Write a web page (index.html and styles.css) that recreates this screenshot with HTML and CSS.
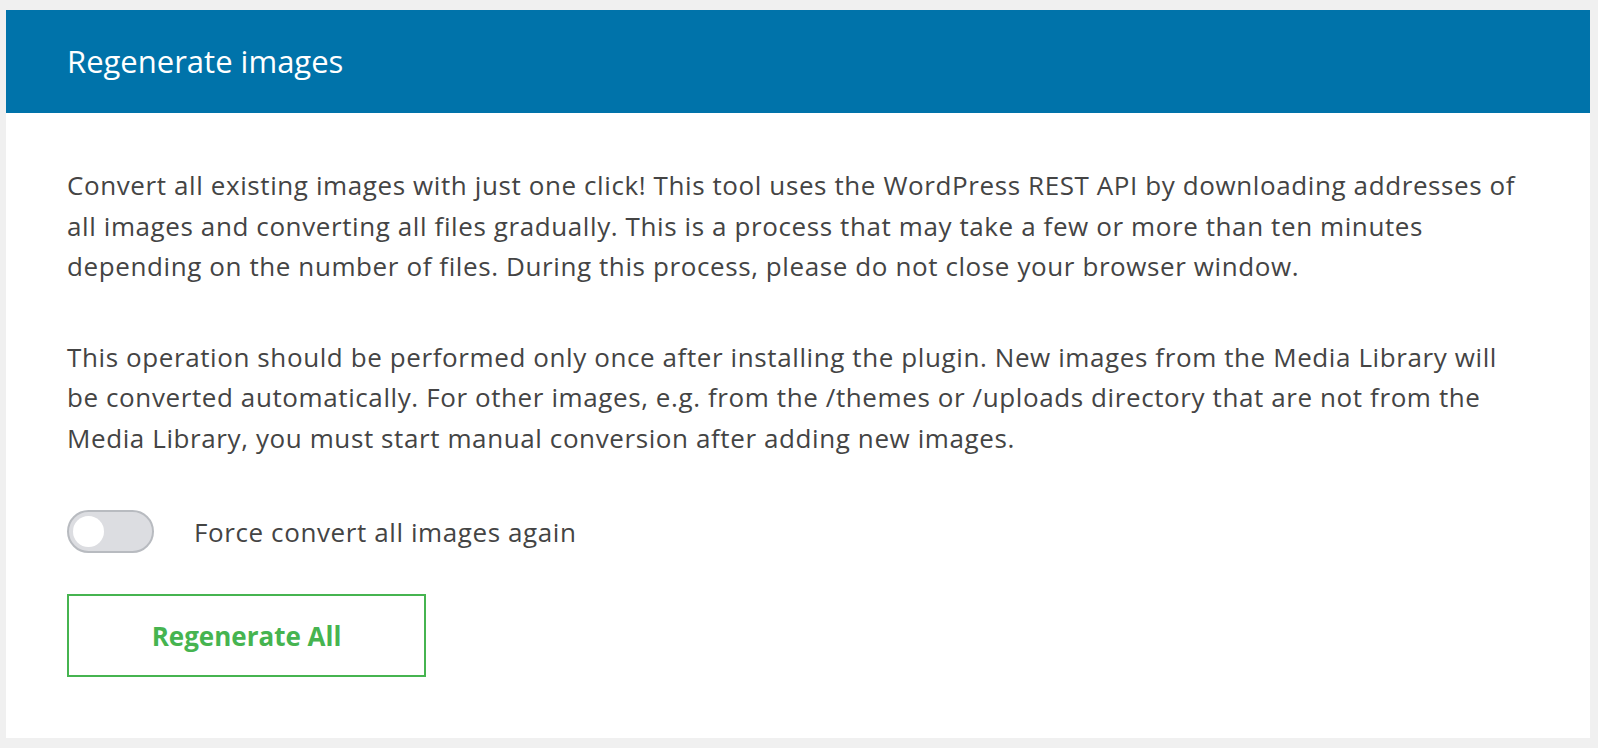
FILE: index.html
```html
<!DOCTYPE html>
<html lang="en">
<head>
<meta charset="utf-8">
<title>Regenerate images</title>
<link rel="stylesheet" href="styles.css">
</head>
<body>
<div class="card">
  <div class="card-header">
    <h2 class="card-title">Regenerate images</h2>
  </div>
  <div class="card-body">
    <p class="text">Convert all existing images with just one click! This tool uses the WordPress REST API by downloading addresses of all images and converting all files gradually. This is a process that may take a few or more than ten minutes depending on the number of files. During this process, please do not close your browser window.</p>
    <p class="text">This operation should be performed only once after installing the plugin. New images from the Media Library will be converted automatically. For other images, e.g. from the /themes or /uploads directory that are not from the Media Library, you must start manual conversion after adding new images.</p>
    <label class="toggle-row">
      <span class="toggle"><span class="toggle-knob"></span></span>
      <span class="toggle-label">Force convert all images again</span>
    </label>
    <button class="btn" type="button">Regenerate All</button>
  </div>
</div>
</body>
</html>
```
FILE: styles.css
```css
* { box-sizing: border-box; }
html, body { margin: 0; }
body {
  background: #f0f0f0;
  padding: 10px 8px 10px 6px;
  font-family: "Open Sans", "Noto Sans", sans-serif;
  color: #444;
}
.card {
  background: #fff;
  height: 728px;
  display: flex;
  flex-direction: column;
}
.card-header {
  background: #0073aa;
  height: 103px;
  display: flex;
  align-items: center;
  padding: 0 61px;
}
.card-title {
  margin: 0;
  color: #fff;
  font-size: 31px;
  font-weight: 400;
  line-height: 1;
}
.card-body {
  padding: 52px 62px 0 61px;
  display: flex;
  flex-direction: column;
  align-items: flex-start;
}
.text {
  margin: 0 0 50px;
  font-size: 26px;
  line-height: 40.5px;
  letter-spacing: 0.6px;
}
.text + .text { margin-bottom: 52px; }
.toggle-row {
  display: flex;
  align-items: center;
  gap: 40px;
}
.toggle {
  width: 87px;
  height: 43px;
  border-radius: 22px;
  background: #dcdde1;
  border: 2px solid #b8bbc0;
  display: flex;
  align-items: center;
  padding-left: 4px;
}
.toggle-knob {
  width: 31px;
  height: 31px;
  border-radius: 50%;
  background: #fff;
}
.toggle-label {
  font-size: 26px;
  letter-spacing: 0.6px;
  color: #444;
}
.btn {
  margin-top: 41px;
  width: 359px;
  height: 83px;
  background: #fff;
  border: 2px solid #46b450;
  color: #46b450;
  font-family: inherit;
  font-weight: 700;
  font-size: 26px;
}
```
